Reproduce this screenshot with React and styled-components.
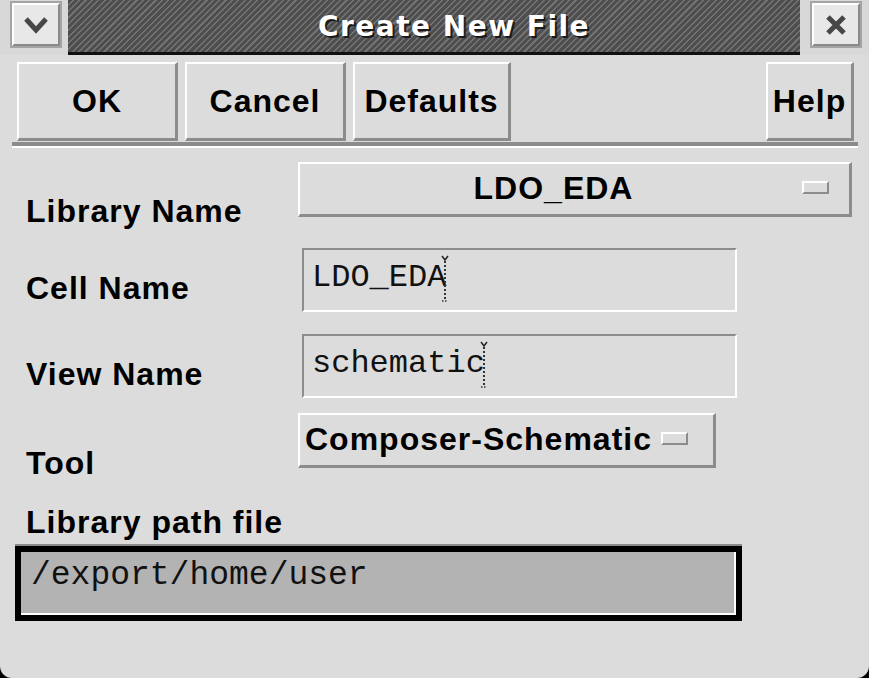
import React from "react";
import styled, { createGlobalStyle } from "styled-components";

const GlobalStyle = createGlobalStyle`
  html, body {
    margin: 0;
    padding: 0;
    background: #000;
  }
  body {
    font-family: "Liberation Sans", Arial, sans-serif;
  }
  * {
    box-sizing: border-box;
  }
`;

const Window = styled.div`
  width: 869px;
  height: 678px;
  background: #dcdcdc;
  overflow: hidden;
  border-radius: 0 0 12px 12px;
`;

// title bar
const TitleBar = styled.div`
  display: flex;
  align-items: flex-start;
  height: 55px;
  background: #d8d8d8;
`;

const WinButton = styled.div`
  flex: none;
  width: 48px;
  height: 43px;
  margin: 3px ${(p) => (p.$right ? "9px" : "8px")} 0 12px;
  background: #e8e8e8;
  border: 2px solid;
  border-color: #ffffff #8a8a8a #8a8a8a #ffffff;
  box-shadow: 0 0 0 2px #a4a4a4;
  display: flex;
  align-items: center;
  justify-content: center;
`;

const TitleStripe = styled.div`
  flex: 1;
  height: 55px;
  border-bottom: 3px solid #111;
  background: repeating-linear-gradient(
    135deg,
    #4e4e4e 0px,
    #4e4e4e 3px,
    #727272 3px,
    #727272 4.5px
  );
  display: flex;
  align-items: center;
  justify-content: center;
  padding-left: 40px;
  color: #fff;
  font-family: "DejaVu Sans", "Liberation Sans", sans-serif;
  font-weight: bold;
  font-size: 28px;
  letter-spacing: 1.5px;
  text-shadow: 2px 2px 0 #1a1a1a;
`;

// action buttons
const ButtonRow = styled.div`
  display: flex;
  gap: 7px;
  padding: 7px 15px 0 17px;
`;

const Button = styled.button`
  width: ${(p) => p.$w}px;
  height: 79px;
  margin-left: ${(p) => (p.$push ? "auto" : "0")};
  padding: 0;
  background: #dcdcdc;
  border-style: solid;
  border-width: 2px 3px 3px 2px;
  border-color: #ffffff #8c8c8c #8c8c8c #ffffff;
  font-family: "Liberation Sans", Arial, sans-serif;
  font-weight: bold;
  font-size: 32px;
  letter-spacing: 1px;
  color: #000;
`;

const Separator = styled.div`
  margin: 1px 11px 0 12px;
  height: 6px;
  border-top: 4px solid #8c8c8c;
  border-bottom: 2px solid #ffffff;
`;

// form
const Form = styled.div`
  padding-left: 15px;
`;

const Row = styled.div`
  display: flex;
  align-items: flex-start;
  margin-top: ${(p) => p.$top}px;
`;

const Label = styled.div`
  flex: none;
  width: ${(p) => (p.$full ? "auto" : "283px")};
  padding-left: 11px;
  padding-top: ${(p) => p.$offset || 0}px;
  margin-top: ${(p) => p.$top || 0}px;
  font-weight: bold;
  font-size: 32px;
  line-height: 32px;
  letter-spacing: 1px;
  color: #000;
`;

const Dropdown = styled.div`
  width: ${(p) => p.$w}px;
  height: 55px;
  display: flex;
  align-items: center;
  padding: 0 ${(p) => p.$gap}px 3px 5px;
  background: #dcdcdc;
  border-style: solid;
  border-width: 2px 3px 3px 2px;
  border-color: #ffffff #8c8c8c #8c8c8c #ffffff;
`;

const DropText = styled.span`
  flex: ${(p) => (p.$center ? 1 : "none")};
  text-align: ${(p) => (p.$center ? "center" : "left")};
  margin-right: ${(p) => (p.$center ? 0 : 9)}px;
  font-weight: bold;
  font-size: 32px;
  line-height: 32px;
  letter-spacing: 1px;
  color: #000;
`;

const Indicator = styled.span`
  flex: none;
  width: 27px;
  height: 13px;
  background: #dcdcdc;
  border: 2px solid;
  border-color: #ffffff #8c8c8c #8c8c8c #ffffff;
`;

const TextField = styled.div`
  width: 435px;
  height: 64px;
  margin-left: 4px;
  padding: 5px 8px 0;
  background: #dcdcdc;
  border: 2px solid;
  border-color: #8c8c8c #ffffff #ffffff #8c8c8c;
  font-family: "Liberation Mono", "Courier New", monospace;
  font-size: 32px;
  line-height: 32px;
  color: #111;
  white-space: pre;
`;

const PathField = styled.div`
  width: 727px;
  height: 75px;
  margin-top: 8px;
  padding: 8px 10px 0;
  background: #b3b3b3;
  border: 6px solid #000;
  box-shadow: inset -2px -2px 0 #ffffff, 0 -2px 0 #8c8c8c;
  font-family: "Liberation Mono", "Courier New", monospace;
  font-size: 33px;
  line-height: 32px;
  color: #111;
  white-space: pre;
`;

const Caret = () => (
  <svg
    width="8"
    height="48"
    viewBox="0 0 8 48"
    style={{ verticalAlign: "-17px", marginLeft: "-5px" }}
  >
    <path d="M1 1 L4 5 L7 1" stroke="#222" strokeWidth="1.5" fill="none" />
    <line
      x1="4"
      y1="6"
      x2="4"
      y2="46"
      stroke="#333"
      strokeWidth="2"
      strokeDasharray="2 2"
    />
    <line
      x1="1"
      y1="46"
      x2="7"
      y2="46"
      stroke="#333"
      strokeWidth="1.5"
      strokeDasharray="1.5 1.5"
    />
  </svg>
);

const App = () => {
  return (
    <Window>
      <GlobalStyle />
      <TitleBar>
        <WinButton>
          <svg width="26" height="18" viewBox="0 0 26 18">
            <polyline
              points="3,3 13,14 23,3"
              stroke="#474747"
              strokeWidth="5"
              fill="none"
            />
          </svg>
        </WinButton>
        <TitleStripe>Create New File</TitleStripe>
        <WinButton $right>
          <svg width="22" height="22" viewBox="0 0 22 22">
            <path
              d="M3 3 L19 19 M19 3 L3 19"
              stroke="#474747"
              strokeWidth="5"
              fill="none"
            />
          </svg>
        </WinButton>
      </TitleBar>

      <ButtonRow>
        <Button $w={161}>OK</Button>
        <Button $w={161}>Cancel</Button>
        <Button $w={158}>Defaults</Button>
        <Button $w={88} $push>
          Help
        </Button>
      </ButtonRow>
      <Separator />

      <Form>
        <Row $top={14}>
          <Label $offset={33}>Library Name</Label>
          <Dropdown $w={554} $gap={20}>
            <DropText $center>LDO_EDA</DropText>
            <Indicator />
          </Dropdown>
        </Row>

        <Row $top={21}>
          <Label $offset={24}>Cell Name</Label>
          <TextField>
            LDO_EDA
            <Caret />
          </TextField>
        </Row>

        <Row $top={22}>
          <Label $offset={24}>View Name</Label>
          <TextField>
            schematic
            <Caret />
          </TextField>
        </Row>

        <Row $top={15}>
          <Label $offset={34}>Tool</Label>
          <Dropdown $w={418} $gap={19}>
            <DropText>Composer-Schematic</DropText>
            <Indicator />
          </Dropdown>
        </Row>

        <Label $full $top={27}>
          Library path file
        </Label>
        <PathField>/export/home/user</PathField>
      </Form>
    </Window>
  );
};

export default App;
